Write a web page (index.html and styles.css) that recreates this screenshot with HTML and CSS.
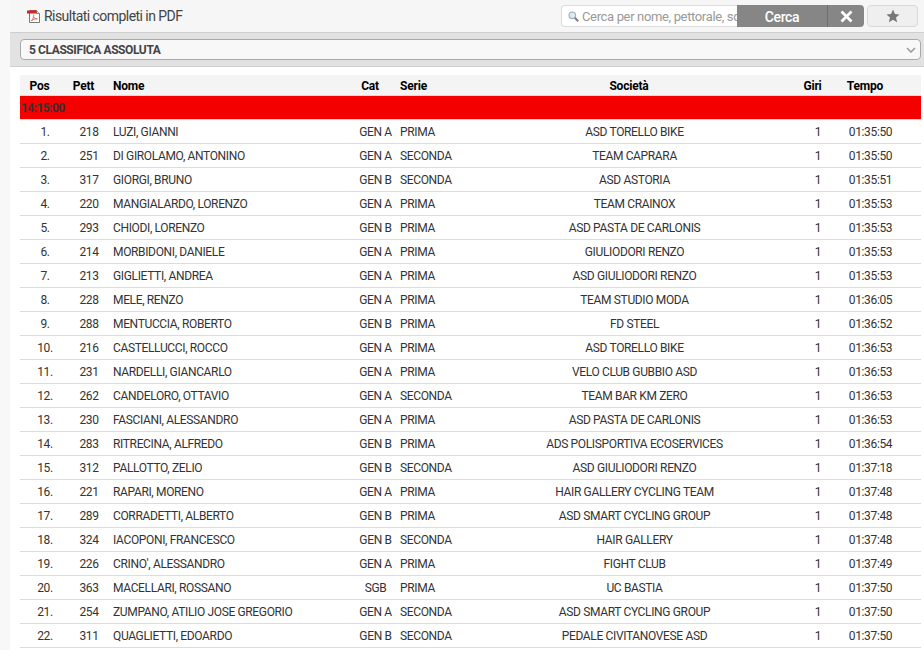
FILE: index.html
```html
<!DOCTYPE html>
<html lang="it">
<head>
<meta charset="utf-8">
<title>Risultati</title>
<link rel="stylesheet" href="styles.css">
</head>
<body>
<div class="page">
  <div class="toolbar">
    <a class="pdf-link">
      <svg class="pdf-icon" width="14" height="14" viewBox="0 0 14 14"><path d="M2.500 1.500h7l3 3v9h-10z" fill="#fff" stroke="#777"/><path d="M9.500 1.500v3h3" fill="#e8e8e8" stroke="#888"/><path d="M0 1.500h9.500v3H0z" fill="#e0201a"/><path d="M4.500 12c1.500-1.800 2.300-4 2.100-6.500M4 11.500c2-1 4.200-1.800 6.500-1.600M6.300 7.500c.8 1.200 2.200 2.300 4 2.400" fill="none" stroke="#e0625c" stroke-width=".9"/></svg>
      <span>Risultati completi in PDF</span>
    </a>
    <div class="tools">
      <div class="search">
        <svg class="lens" width="11" height="11" viewBox="0 0 11 11"><circle cx="4.300" cy="4.300" r="3.300" fill="#dce9f0" stroke="#a3adb2" stroke-width="1.100"/><path d="M6.800 6.800l3.400 3.400" stroke="#7f7f7f" stroke-width="2"/></svg>
        <input class="search-input" type="text" placeholder="Cerca per nome, pettorale, società">
      </div>
      <button class="btn-go" type="button">Cerca</button>
      <button class="btn-clear" type="button" aria-label="Azzera"><svg width="13" height="13" viewBox="0 0 13 13"><path d="M1.500 1.500l10 10M11.500 1.500l-10 10" stroke="#fff" stroke-width="2.800"/></svg></button>
      <button class="btn-star" type="button" aria-label="Preferiti"><svg width="14" height="14" viewBox="0 0 13 13"><path d="M6.500.5l1.800 4.100 4.300.4-3.300 2.900 1 4.400-3.800-2.300-3.800 2.300 1-4.400L.4 5l4.300-.4z" fill="#777"/></svg></button>
    </div>
  </div>
  <div class="filter">
    <div class="select-wrap">
      <select class="select"><option>5 CLASSIFICA ASSOLUTA</option></select>
      <svg class="chevron" width="10" height="6" viewBox="0 0 10 6"><path d="M1 1l4 4 4-4" fill="none" stroke="#999" stroke-width="1.500"/></svg>
    </div>
  </div>
  <div class="content">
    <table class="results">
      <colgroup>
        <col class="c-pos"><col class="c-pett"><col class="c-nome"><col class="c-cat"><col class="c-serie"><col class="c-soc"><col class="c-giri"><col class="c-tempo">
      </colgroup>
      <thead>
        <tr><th>Pos</th><th>Pett</th><th class="l">Nome</th><th>Cat</th><th class="l">Serie</th><th>Società</th><th>Giri</th><th class="t">Tempo</th></tr>
      </thead>
      <tbody>
        <tr class="group"><td colspan="8">14:15:00</td></tr>
        <tr><td>1.</td><td>218</td><td class="l">LUZI, GIANNI</td><td>GEN A</td><td class="l">PRIMA</td><td>ASD TORELLO BIKE</td><td>1</td><td class="t">01:35:50</td></tr>
        <tr><td>2.</td><td>251</td><td class="l">DI GIROLAMO, ANTONINO</td><td>GEN A</td><td class="l">SECONDA</td><td>TEAM CAPRARA</td><td>1</td><td class="t">01:35:50</td></tr>
        <tr><td>3.</td><td>317</td><td class="l">GIORGI, BRUNO</td><td>GEN B</td><td class="l">SECONDA</td><td>ASD ASTORIA</td><td>1</td><td class="t">01:35:51</td></tr>
        <tr><td>4.</td><td>220</td><td class="l">MANGIALARDO, LORENZO</td><td>GEN A</td><td class="l">PRIMA</td><td>TEAM CRAINOX</td><td>1</td><td class="t">01:35:53</td></tr>
        <tr><td>5.</td><td>293</td><td class="l">CHIODI, LORENZO</td><td>GEN B</td><td class="l">PRIMA</td><td>ASD PASTA DE CARLONIS</td><td>1</td><td class="t">01:35:53</td></tr>
        <tr><td>6.</td><td>214</td><td class="l">MORBIDONI, DANIELE</td><td>GEN A</td><td class="l">PRIMA</td><td>GIULIODORI RENZO</td><td>1</td><td class="t">01:35:53</td></tr>
        <tr><td>7.</td><td>213</td><td class="l">GIGLIETTI, ANDREA</td><td>GEN A</td><td class="l">PRIMA</td><td>ASD GIULIODORI RENZO</td><td>1</td><td class="t">01:35:53</td></tr>
        <tr><td>8.</td><td>228</td><td class="l">MELE, RENZO</td><td>GEN A</td><td class="l">PRIMA</td><td>TEAM STUDIO MODA</td><td>1</td><td class="t">01:36:05</td></tr>
        <tr><td>9.</td><td>288</td><td class="l">MENTUCCIA, ROBERTO</td><td>GEN B</td><td class="l">PRIMA</td><td>FD STEEL</td><td>1</td><td class="t">01:36:52</td></tr>
        <tr><td>10.</td><td>216</td><td class="l">CASTELLUCCI, ROCCO</td><td>GEN A</td><td class="l">PRIMA</td><td>ASD TORELLO BIKE</td><td>1</td><td class="t">01:36:53</td></tr>
        <tr><td>11.</td><td>231</td><td class="l">NARDELLI, GIANCARLO</td><td>GEN A</td><td class="l">PRIMA</td><td>VELO CLUB GUBBIO ASD</td><td>1</td><td class="t">01:36:53</td></tr>
        <tr><td>12.</td><td>262</td><td class="l">CANDELORO, OTTAVIO</td><td>GEN A</td><td class="l">SECONDA</td><td>TEAM BAR KM ZERO</td><td>1</td><td class="t">01:36:53</td></tr>
        <tr><td>13.</td><td>230</td><td class="l">FASCIANI, ALESSANDRO</td><td>GEN A</td><td class="l">PRIMA</td><td>ASD PASTA DE CARLONIS</td><td>1</td><td class="t">01:36:53</td></tr>
        <tr><td>14.</td><td>283</td><td class="l">RITRECINA, ALFREDO</td><td>GEN B</td><td class="l">PRIMA</td><td>ADS POLISPORTIVA ECOSERVICES</td><td>1</td><td class="t">01:36:54</td></tr>
        <tr><td>15.</td><td>312</td><td class="l">PALLOTTO, ZELIO</td><td>GEN B</td><td class="l">SECONDA</td><td>ASD GIULIODORI RENZO</td><td>1</td><td class="t">01:37:18</td></tr>
        <tr><td>16.</td><td>221</td><td class="l">RAPARI, MORENO</td><td>GEN A</td><td class="l">PRIMA</td><td>HAIR GALLERY CYCLING TEAM</td><td>1</td><td class="t">01:37:48</td></tr>
        <tr><td>17.</td><td>289</td><td class="l">CORRADETTI, ALBERTO</td><td>GEN B</td><td class="l">PRIMA</td><td>ASD SMART CYCLING GROUP</td><td>1</td><td class="t">01:37:48</td></tr>
        <tr><td>18.</td><td>324</td><td class="l">IACOPONI, FRANCESCO</td><td>GEN B</td><td class="l">SECONDA</td><td>HAIR GALLERY</td><td>1</td><td class="t">01:37:48</td></tr>
        <tr><td>19.</td><td>226</td><td class="l">CRINO', ALESSANDRO</td><td>GEN A</td><td class="l">PRIMA</td><td>FIGHT CLUB</td><td>1</td><td class="t">01:37:49</td></tr>
        <tr><td>20.</td><td>363</td><td class="l">MACELLARI, ROSSANO</td><td>SGB</td><td class="l">PRIMA</td><td>UC BASTIA</td><td>1</td><td class="t">01:37:50</td></tr>
        <tr><td>21.</td><td>254</td><td class="l">ZUMPANO, ATILIO JOSE GREGORIO</td><td>GEN A</td><td class="l">SECONDA</td><td>ASD SMART CYCLING GROUP</td><td>1</td><td class="t">01:37:50</td></tr>
        <tr><td>22.</td><td>311</td><td class="l">QUAGLIETTI, EDOARDO</td><td>GEN B</td><td class="l">SECONDA</td><td>PEDALE CIVITANOVESE ASD</td><td>1</td><td class="t">01:37:50</td></tr>
      </tbody>
    </table>
  </div>
</div>
</body>
</html>
```
FILE: styles.css
```css
* { box-sizing: border-box; }
html, body { margin: 0; height: 100%; overflow: hidden; }
body {
  background: #f8f8f8;
  font-family: Roboto, "Liberation Sans", sans-serif;
  font-size: 12px;
  color: #333;
  letter-spacing: -0.35px;
}
.page { margin-left: 10px; background: #fff; min-height: 100%; }
.toolbar {
  height: 33px;
  background: #f6f6f6;
  border-bottom: 1px solid #cfcfcf;
  display: flex;
  align-items: center;
  justify-content: space-between;
  padding: 0 6px 0 17px;
}
.pdf-link { display: flex; align-items: center; gap: 3px; font-size: 14px; color: #444; letter-spacing: -0.55px; }
.tools { display: flex; align-items: center; }
.search {
  width: 176px;
  height: 22px;
  display: flex;
  align-items: center;
  gap: 3px;
  padding-left: 6px;
  background: #fff;
  border: 1px solid #ddd;
  border-right: 0;
  border-radius: 4px 0 0 4px;
  overflow: hidden;
}
.lens { flex: none; }
.search-input {
  flex: 1;
  min-width: 0;
  border: 0;
  padding: 0;
  outline: 0;
  background: transparent;
  font: inherit;
  font-size: 13px;
  letter-spacing: -0.35px;
}
.search-input::placeholder { color: #999; opacity: 1; }
.btn-go, .btn-clear {
  height: 22px;
  border: 0;
  background: #868686;
  color: #fff;
  font: inherit;
  font-size: 14px;
  font-weight: 500;
  letter-spacing: -0.4px;
  padding: 1px 0 0;
}
.btn-go { width: 91px; border-right: 1px solid #6f6f6f; }
.btn-clear { width: 36px; padding: 0; border-radius: 0 4px 4px 0; display: flex; align-items: center; justify-content: center; }
.btn-star {
  width: 51px;
  height: 22px;
  margin-left: 3px;
  border: 1px solid #d8d8d8;
  border-radius: 4px;
  background: #efefef;
  display: flex;
  align-items: center;
  justify-content: center;
  padding: 0;
}
.filter {
  height: 34px;
  background: #e2e2e2;
  border-bottom: 1px solid #cfcfcf;
  padding: 6px 3px 0 10px;
}
.select-wrap { position: relative; height: 21px; }
.select {
  width: 100%;
  height: 21px;
  appearance: none;
  background: #f8f8f8;
  border: 1px solid #a9a9a9;
  border-radius: 4px;
  padding: 0 0 0 8px;
  font: inherit;
  font-weight: 700;
  font-size: 12px;
  letter-spacing: -0.4px;
  color: #444;
}
.chevron { position: absolute; right: 5px; top: 8px; }
.content { padding: 8px 3px 0 10px; }
.results { width: 901px; table-layout: fixed; border-collapse: collapse; }
.c-pos { width: 50px; }
.c-pett { width: 38px; }
.c-nome { width: 248px; }
.c-cat { width: 39px; }
.c-serie { width: 75px; }
.c-soc { width: 329px; }
.c-giri { width: 38px; }
.c-tempo { width: 84px; }
th, td { padding: 0; text-align: center; white-space: nowrap; overflow: hidden; }
th {
  height: 20px;
  background: #f4f4f4;
  border-bottom: 1px solid #dcdcdc;
  color: #000;
  font-weight: 700;
  letter-spacing: -0.2px;
  padding: 2px 11px 0 0;
}
td { height: 24px; border-bottom: 1px solid #dcdcdc; padding-top: 1px; }
th.l { text-align: left; padding: 2px 0 0 5px; }
td.l { text-align: left; padding: 1px 0 0 5px; }
td.t { padding-right: 17px; }
th.t { padding-right: 28px; }
.group td {
  background: #f50000;
  border-bottom: 1px solid #dcdcdc;
  text-align: left;
  font-weight: 700;
  letter-spacing: -0.55px;
  color: #333;
  padding-left: 1px;
}
```
